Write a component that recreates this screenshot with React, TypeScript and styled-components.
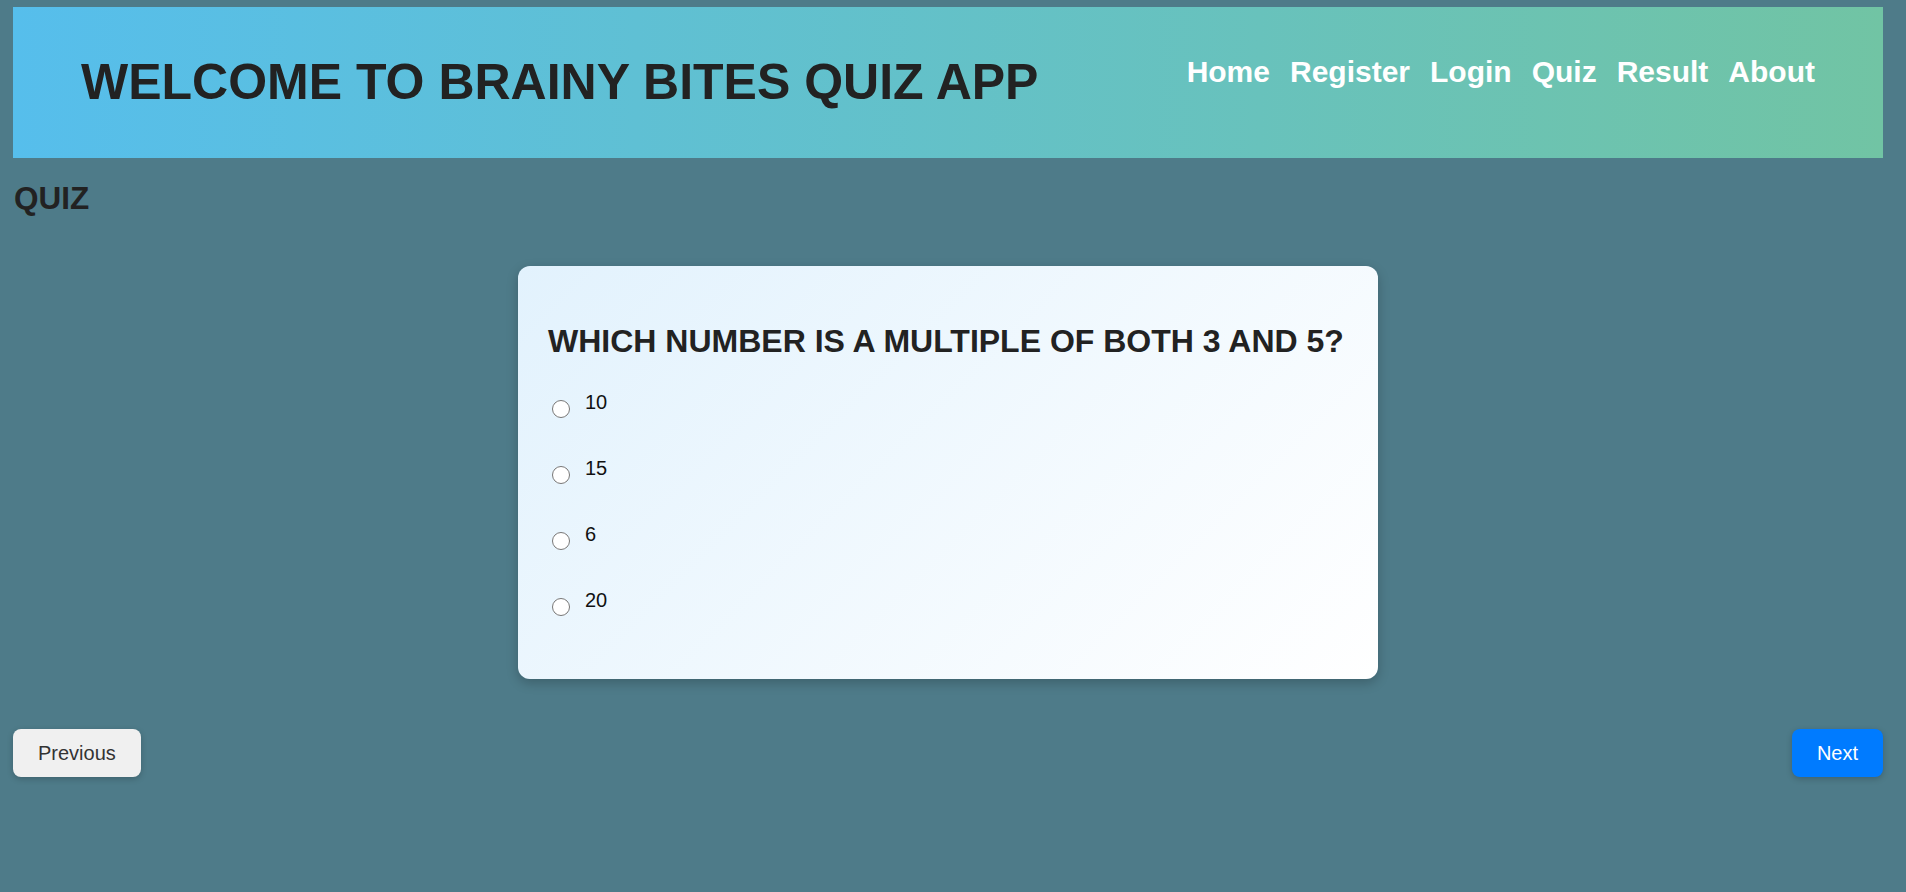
import React, { useState } from "react";
import styled, { createGlobalStyle } from "styled-components";

const GlobalStyle = createGlobalStyle`
  html, body {
    margin: 0;
    padding: 0;
    background: #4e7b89;
    font-family: "Liberation Sans", Arial, sans-serif;
  }
  * { box-sizing: border-box; }
`;

const Page = styled.div`
  padding: 7px 23px 40px 13px;
  min-height: 892px;
  background: #4e7b89;
`;

const Header = styled.header`
  height: 151px;
  display: flex;
  align-items: center;
  justify-content: space-between;
  padding: 0 68px;
  background: linear-gradient(to right, #56beec, #71c4a4);
`;

const Title = styled.h1`
  margin: 0;
  font-size: 50px;
  font-weight: 700;
  color: #222;
  line-height: 1.15;
  white-space: nowrap;
`;

const Nav = styled.nav`
  display: flex;
  gap: 20px;
  margin-bottom: 22px;
`;

const NavLink = styled.a`
  color: #fff;
  font-size: 30px;
  font-weight: 700;
  text-decoration: none;
  cursor: pointer;
`;

const SectionTitle = styled.h2`
  margin: 22px 0 0 1px;
  font-size: 31.5px;
  font-weight: 700;
  color: #222;
  line-height: 1.15;
`;

const CardRow = styled.div`
  display: flex;
  justify-content: center;
  margin-top: 50px;
`;

const Card = styled.div`
  width: 860px;
  padding: 30px 30px 28px;
  border-radius: 12px;
  background: linear-gradient(135deg, #e2f2fd 0%, #ffffff 100%);
  box-shadow: 0 4px 12px rgba(0, 0, 0, 0.22);
`;

const Question = styled.h2`
  margin: 27px 0 27px;
  font-size: 32px;
  font-weight: 700;
  color: #222;
  line-height: 1.15;
  white-space: nowrap;
`;

const Option = styled.label`
  display: flex;
  align-items: flex-start;
  height: 66px;
  padding-top: 4px;
  font-size: 20px;
  color: #111;
  line-height: 1.15;
  cursor: pointer;
`;

const Radio = styled.input.attrs({ type: "radio" })`
  width: 18px;
  height: 18px;
  margin: 9px 15px 0 4px;
  flex-shrink: 0;
`;

const ButtonRow = styled.div`
  display: flex;
  justify-content: space-between;
  margin-top: 50px;
`;

const Button = styled.button<{ $primary?: boolean }>`
  font-family: "Liberation Sans", Arial, sans-serif;
  font-size: 20px;
  line-height: 24px;
  padding: 12px 25px;
  border: none;
  border-radius: 8px;
  cursor: pointer;
  background: ${(p) => (p.$primary ? "#007bff" : "#f0f0f0")};
  color: ${(p) => (p.$primary ? "#fff" : "#333")};
  box-shadow: 0 2px 6px rgba(0, 0, 0, 0.2);
`;

const options = ["10", "15", "6", "20"];

export default function App() {
  const [selected, setSelected] = useState<string | null>(null);
  return (
    <>
      <GlobalStyle />
      <Page>
        <Header>
          <Title>WELCOME TO BRAINY BITES QUIZ APP</Title>
          <Nav>
            <NavLink>Home</NavLink>
            <NavLink>Register</NavLink>
            <NavLink>Login</NavLink>
            <NavLink>Quiz</NavLink>
            <NavLink>Result</NavLink>
            <NavLink>About</NavLink>
          </Nav>
        </Header>
        <SectionTitle>QUIZ</SectionTitle>
        <CardRow>
          <Card>
            <Question>WHICH NUMBER IS A MULTIPLE OF BOTH 3 AND 5?</Question>
            {options.map((o) => (
              <Option key={o}>
                <Radio
                  name="answer"
                  checked={selected === o}
                  onChange={() => setSelected(o)}
                />
                {o}
              </Option>
            ))}
          </Card>
        </CardRow>
        <ButtonRow>
          <Button>Previous</Button>
          <Button $primary>Next</Button>
        </ButtonRow>
      </Page>
    </>
  );
}
